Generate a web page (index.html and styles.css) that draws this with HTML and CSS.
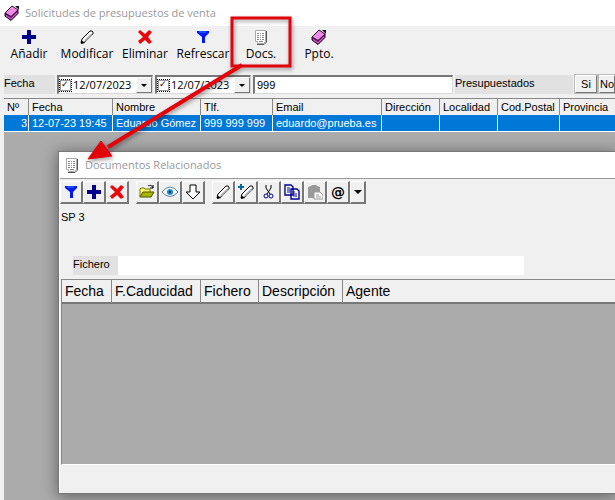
FILE: index.html
```html
<!DOCTYPE html>
<html lang="es">
<head>
    <meta charset="UTF-8">
    <meta name="viewport" content="width=device-width, initial-scale=1.0">
    <title>Solicitudes de presupuestos de venta</title>
    <link rel="stylesheet" href="styles.css">
</head>
<body>
    <svg class="sprites" aria-hidden="true">
        <symbol id="book" viewBox="0 0 16 16">
            <path d="M1 8v3l6 4.500 7-7V5l-7 6z" fill="#8c1c8c" stroke="#200820"/>
            <path d="M1 8l7-7 6 4-7 6.500z" fill="#ee8ae8" stroke="#301030"/>
            <path d="M2 10.500l5 3.500 6-6" fill="none" stroke="#d070d0"/>
            <path d="M11 1h4v4z" fill="#181018"/>
        </symbol>
        <symbol id="plus" viewBox="0 0 16 16">
            <path d="M6 1h4v5h5v4h-5v5H6v-5H1V6h5z" fill="#00008b"/>
        </symbol>
        <symbol id="pencil" viewBox="0 0 16 16">
            <path d="M3 10l8-8h2l1 1v2l-8 8-4 1z" fill="#fff" stroke="#000"/>
            <path d="M6 12l7-7" stroke="#aaa" stroke-width="2"/>
            <path d="M2 15v-4l4 3z" fill="#000"/>
        </symbol>
        <symbol id="cross" viewBox="0 0 16 16">
            <path d="M1 3l2-2 5 4 4-4 3 2-4 5 4 5-3 2-4-4-5 4-2-3 5-4z" fill="#e80808"/>
        </symbol>
        <symbol id="funnel" viewBox="0 0 16 16">
            <path d="M2 2h12v2l-4 4v6H7V8L2 4z" fill="#0018f0"/>
            <path d="M4 3h7" stroke="#2090ff"/>
        </symbol>
        <symbol id="doc" viewBox="0 0 16 16">
            <path d="M2.500 1.500h10v11l-2 2h-6v-2h-2z" fill="#fff" stroke="#a8a8a8"/>
            <path d="M4 15.500h7l2.500-2.500V2" fill="none" stroke="#555"/>
            <path d="M4 4.500h2m1 0h1m1 0h2M4 6.500h2m1 0h1m1 0h2M4 8.500h2m1 0h1m1 0h2M4 10.500h2m1 0h1m1 0h2M6 12.500h4" stroke="#888"/>
        </symbol>
        <symbol id="folder" viewBox="0 0 16 16">
            <path d="M1 13V5l1-1h3l1 1h5v3" fill="#ffff70" stroke="#707000"/>
            <path d="M1 13l3-5h11l-3 5z" fill="#a8b800" stroke="#505000"/>
            <path d="M9 2c2-1 4-1 5 2m-3 0h3V1" fill="none" stroke="#000"/>
        </symbol>
        <symbol id="eye" viewBox="0 0 16 16">
            <path d="M0 8q8-10 16 0-8 9-16 0z" fill="#fff" stroke="#5580a0"/>
            <circle cx="8" cy="8" r="3" fill="#1888d8"/>
            <circle cx="8" cy="8" r="1" fill="#001830"/>
        </symbol>
        <symbol id="down" viewBox="0 0 16 16">
            <path d="M5 1h6v7h4l-7 7-7-7h4z" fill="#fff" stroke="#000"/>
        </symbol>
        <symbol id="pencil-plus" viewBox="0 0 16 16">
            <use href="#pencil" x="1" width="16" height="16"/>
            <path d="M3 0v6M0 3h6" stroke="#106898" stroke-width="2"/>
        </symbol>
        <symbol id="cut" viewBox="0 0 16 16">
            <path d="M5 1v3l4 6M10 1v3L6 10" fill="none" stroke="#000"/>
            <circle cx="5" cy="12" r="2" fill="none" stroke="#000090"/>
            <circle cx="10" cy="12" r="2" fill="none" stroke="#000090"/>
        </symbol>
        <symbol id="copy" viewBox="0 0 16 16">
            <path d="M1 1h6l2 2v8H1zM7 5h6l2 2v8H7z" fill="#fff" stroke="#000090" stroke-width="1.400"/>
            <path d="M3 4h3M3 6h3M3 8h3M9 8h2M9 10h4M9 12h4" stroke="#000090"/>
        </symbol>
        <symbol id="paste" viewBox="0 0 16 16">
            <path d="M1 3l3-1 1-1h4l1 1 3 1v11H1z" fill="#999"/>
            <path d="M7 8h6l3 3v4H7z" fill="#fff" stroke="#999"/>
            <path d="M9 11h3M9 13h5" stroke="#999"/>
        </symbol>
    </svg>

    <div class="app">
        <header class="titlebar">
            <svg class="icon"><use href="#book"/></svg>
            <h1>Solicitudes de presupuestos de venta</h1>
        </header>

        <nav class="toolbar">
            <button class="tool"><svg class="icon"><use href="#plus"/></svg>Añadir</button>
            <button class="tool"><svg class="icon"><use href="#pencil"/></svg>Modificar</button>
            <button class="tool"><svg class="icon"><use href="#cross"/></svg>Eliminar</button>
            <button class="tool"><svg class="icon"><use href="#funnel"/></svg>Refrescar</button>
            <button class="tool"><svg class="icon"><use href="#doc"/></svg>Docs.</button>
            <button class="tool"><svg class="icon"><use href="#book"/></svg>Ppto.</button>
        </nav>

        <form class="filters">
            <label class="caption" for="desde">Fecha</label>
            <div class="date">
                <input type="checkbox" aria-label="Usar fecha desde" checked>
                <input type="text" id="desde" value="12/07/2023">
                <button type="button" class="drop" aria-label="Abrir calendario"></button>
            </div>
            <div class="date">
                <input type="checkbox" aria-label="Usar fecha hasta" checked>
                <input type="text" aria-label="Fecha hasta" value="12/07/2023">
                <button type="button" class="drop" aria-label="Abrir calendario"></button>
            </div>
            <input type="text" class="search" aria-label="Buscar" value="999">
            <span class="caption quoted">Presupuestados</span>
            <button type="button" class="choice">Si</button>
            <button type="button" class="choice">No</button>
        </form>

        <main class="grid">
            <table class="requests">
                <colgroup>
                    <col class="c-num"><col class="c-date"><col class="c-name"><col class="c-phone"><col class="c-mail"><col class="c-place"><col class="c-place"><col class="c-zip"><col>
                </colgroup>
                <thead>
                    <tr><th>Nº</th><th>Fecha</th><th>Nombre</th><th>Tlf.</th><th>Email</th><th>Dirección</th><th>Localidad</th><th>Cod.Postal</th><th>Provincia</th></tr>
                </thead>
                <tbody>
                    <tr><td class="num">3</td><td>12-07-23 19:45</td><td>Eduardo Gómez</td><td>999 999 999</td><td>eduardo@prueba.es</td><td></td><td></td><td></td><td></td></tr>
                </tbody>
            </table>
        </main>
    </div>

    <section class="window">
        <header class="titlebar">
            <svg class="icon"><use href="#doc"/></svg>
            <h2>Documentos Relacionados</h2>
        </header>
        <div class="window-tools">
            <div class="group">
                <button aria-label="Filtrar"><svg class="icon"><use href="#funnel"/></svg></button>
                <button aria-label="Añadir"><svg class="icon"><use href="#plus"/></svg></button>
                <button aria-label="Eliminar"><svg class="icon"><use href="#cross"/></svg></button>
            </div>
            <div class="group">
                <button aria-label="Abrir"><svg class="icon"><use href="#folder"/></svg></button>
                <button aria-label="Ver"><svg class="icon"><use href="#eye"/></svg></button>
                <button aria-label="Descargar"><svg class="icon"><use href="#down"/></svg></button>
            </div>
            <div class="group">
                <button aria-label="Modificar"><svg class="icon"><use href="#pencil"/></svg></button>
                <button aria-label="Modificar y añadir"><svg class="icon"><use href="#pencil-plus"/></svg></button>
                <button aria-label="Cortar"><svg class="icon"><use href="#cut"/></svg></button>
                <button aria-label="Copiar"><svg class="icon"><use href="#copy"/></svg></button>
                <button aria-label="Pegar" disabled><svg class="icon"><use href="#paste"/></svg></button>
                <button class="at">@</button>
                <button class="more" aria-label="Más opciones"></button>
            </div>
        </div>
        <p class="ref">SP 3</p>
        <div class="file">
            <label class="caption" for="fichero">Fichero</label>
            <input type="text" id="fichero">
        </div>
        <div class="docs">
            <table>
                <colgroup>
                    <col class="d-date"><col class="d-expiry"><col class="d-file"><col class="d-desc"><col>
                </colgroup>
                <thead>
                    <tr><th>Fecha</th><th>F.Caducidad</th><th>Fichero</th><th>Descripción</th><th>Agente</th></tr>
                </thead>
            </table>
        </div>
    </section>

    <!-- marca del botón Docs. y flecha hasta su ventana -->
    <svg class="callout" width="320" height="180" aria-hidden="true">
        <rect x="232" y="18" width="58" height="48" fill="none" stroke="#e3040b" stroke-width="3"/>
        <path d="M242 65L108 147" stroke="#e3040b" stroke-width="4"/>
        <path d="M88 159l13-18 11 15z" fill="#e3040b" stroke="#e3040b"/>
    </svg>
</body>
</html>
```

FILE: styles.css
```css
* {
    box-sizing: border-box;
}
body {
    margin: 0;
    height: 100vh;
    position: relative;
    overflow: hidden;
    background: #f0f0f0;
    color: #000;
    font: 11px/14px "Liberation Sans", Arial, sans-serif;
}
button, input {
    font: inherit;
    color: inherit;
    margin: 0;
    padding: 0;
    border: 0;
    border-radius: 0;
}
.sprites {
    display: none;
}
.icon {
    width: 16px;
    height: 16px;
    flex: none;
}
.app {
    height: 100%;
    display: flex;
    flex-direction: column;
}
.titlebar {
    display: flex;
    align-items: center;
    gap: 5px;
    height: 26px;
    padding: 0 4px;
    background: #fff;
}
h1, h2 {
    margin: 0;
    font: 11px/16px "Open Sans", "Segoe UI", sans-serif;
    color: #999;
    white-space: nowrap;
}
.toolbar {
    display: flex;
    height: 49px;
}
.tool {
    display: flex;
    flex-direction: column;
    align-items: center;
    gap: 1px;
    width: 58px;
    padding-top: 3px;
    background: none;
    font: 12px/16px "Open Sans", "Segoe UI", sans-serif;
}
.filters {
    display: flex;
    gap: 2px;
    height: 20px;
    padding-left: 4px;
    white-space: nowrap;
}
.caption {
    width: 51px;
    height: 19px;
    flex: none;
    background: #e1e1e1;
    line-height: 16px;
}
.date, .search {
    flex: none;
    height: 19px;
    background: #fff;
    border: 1px solid #d8d8d8;
    border-top: 2px solid #777;
    border-left: 2px solid #777;
}
.date {
    display: flex;
    align-items: center;
    width: 96px;
    font: 11px/14px "Open Sans", "Segoe UI", sans-serif;
}
.date input[type="text"] {
    flex: 1;
    min-width: 0;
    background: none;
}
.date input[type="checkbox"] {
    appearance: none;
    flex: none;
    width: 13px;
    height: 13px;
    margin: 0 1px 0 0;
    border: 1px dotted #000;
    display: grid;
    place-items: center;
}
.date input[type="checkbox"]::before {
    content: "✓";
    width: 9px;
    height: 9px;
    border: 1px solid #999;
    font: bold 9px/7px "DejaVu Sans", sans-serif;
}
.drop, .choice, .window-tools button {
    background: #f0f0f0;
    border: 1px solid #fff;
    border-right-color: #777;
    border-bottom-color: #777;
}
.drop {
    flex: none;
    width: 16px;
    height: 16px;
    display: grid;
    place-items: center;
}
.drop::before, .more::before {
    content: "";
    border: 3px solid transparent;
    border-top-color: #000;
    border-bottom: 0;
}
.search {
    width: 200px;
    padding-left: 2px;
}
.quoted {
    width: 118px;
}
.choice {
    flex: 0 1 22px;
    min-width: 16px;
    height: 18px;
    box-shadow: 0 0 0 1px #bbb;
}
.choice:first-of-type {
    flex-shrink: 0;
}
.grid {
    flex: 1;
    margin: 3px 0 0 4px;
    background: #ababab;
}
table {
    width: 100%;
    table-layout: fixed;
    border-collapse: separate;
    border-spacing: 0;
    white-space: nowrap;
}
th, td {
    font-weight: normal;
    text-align: left;
    overflow: hidden;
}
th {
    background: #f0f0f0;
    border-top: 1px solid #888;
    border-right: 1px solid #888;
}
th:last-child {
    border-right: 0;
}
.requests th {
    height: 17px;
    padding: 0 3px;
}
.requests td {
    height: 17px;
    padding: 0 3px;
    background: #0078d7;
    color: #fff;
    border-right: 1px solid #fff;
    border-bottom: 1px solid #fff;
}
.requests td:last-child {
    border-right: 0;
}
.requests .num {
    padding-right: 1px;
    text-align: right;
}
.c-num { width: 25px; }
.c-date { width: 84px; }
.c-name { width: 88px; }
.c-phone { width: 72px; }
.c-mail { width: 109px; }
.c-place { width: 58px; }
.c-zip { width: 62px; }
.window {
    position: absolute;
    top: 152px;
    right: 0;
    bottom: 7px;
    left: 59px;
    display: flex;
    flex-direction: column;
    background: #f0f0f0;
    border-left: 1px solid #fff;
    box-shadow: 0 0 0 1px #777, 0 2px 14px 2px rgba(0, 0, 0, 0.4);
}
.window .titlebar {
    height: 27px;
    border-bottom: 1px solid #999;
}
.window-tools {
    display: flex;
    gap: 7px;
    padding-top: 2px;
}
.group {
    display: flex;
}
.window-tools button {
    display: grid;
    place-items: center;
    width: 23px;
    height: 23px;
    border-right-width: 2px;
    border-bottom-width: 2px;
}
.window-tools .at {
    font: bold 14px/16px "DejaVu Sans", sans-serif;
}
.window-tools .more {
    width: 16px;
}
.more::before {
    border-width: 4px;
    border-bottom: 0;
}
.ref {
    margin: 6px 0 0 1px;
}
.file {
    display: flex;
    margin: 32px 91px 4px 13px;
}
.file .caption {
    width: 45px;
}
.file input {
    flex: 1;
    min-width: 0;
    height: 19px;
    background: #fff;
}
.docs {
    flex: 1;
    margin: 0 0 28px 1px;
    background: #ababab;
    border-left: 1px solid #888;
    border-bottom: 1px solid #fff;
}
.docs th {
    height: 25px;
    padding: 0 3px;
    border-bottom: 2px solid #777;
    font-size: 14px;
    line-height: 20px;
}
.d-date { width: 50px; }
.d-expiry { width: 89px; }
.d-file { width: 58px; }
.d-desc { width: 84px; }
.callout {
    position: absolute;
    top: 0;
    left: 0;
    pointer-events: none;
    filter: drop-shadow(1px 2px 2px rgba(0, 0, 0, 0.4));
}
```
